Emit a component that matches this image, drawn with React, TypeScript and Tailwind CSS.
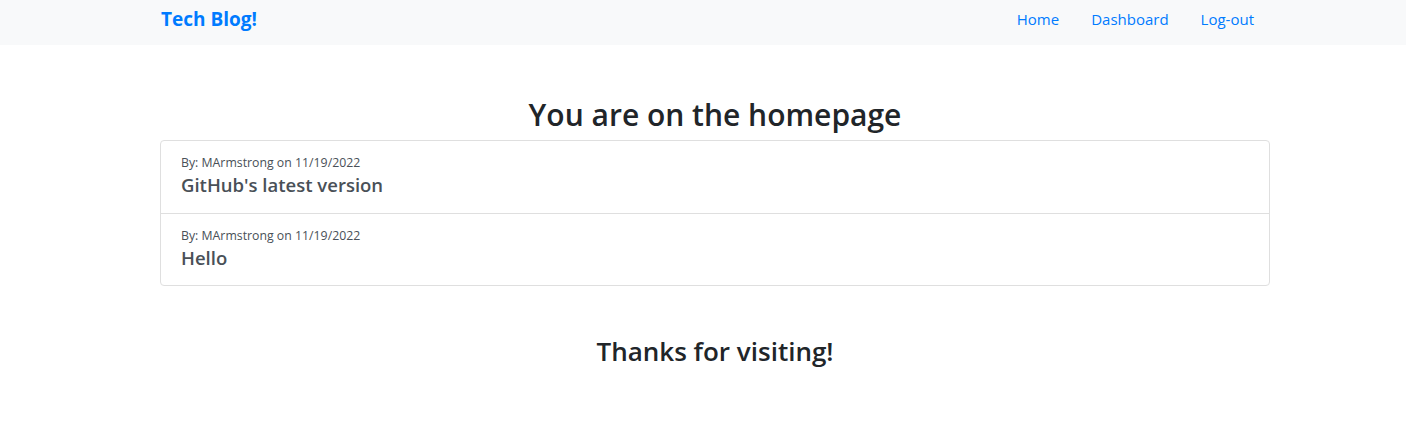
const posts = [
  { author: "MArmstrong", date: "11/19/2022", title: "GitHub's latest version" },
  { author: "MArmstrong", date: "11/19/2022", title: "Hello" },
];

const FONT = "font-['Open_Sans','Noto_Sans',sans-serif]";

export default function App() {
  return (
    <div className={`min-h-[434px] bg-white text-[#212529] ${FONT}`}>
      {/* Navbar */}
      <nav className="h-[45px] bg-[#f8f9fa]">
        <div className="ml-[160px] flex h-full w-[1110px] items-center justify-between pb-[6px]">
          <a className="pl-px text-[19px] font-bold text-[#007bff]">Tech Blog!</a>
          <div className="flex items-center text-[15px] text-[#007bff]">
            <a className="px-4">Home</a>
            <a className="px-4">Dashboard</a>
            <a className="px-4">Log-out</a>
          </div>
        </div>
      </nav>

      <main className="ml-[160px] w-[1110px]">
        <h1 className="mt-[51px] text-center text-[30px] leading-[38px] font-semibold">
          You are on the homepage
        </h1>

        <div className="mt-[6px] rounded border border-[#dfdfdf]">
          {posts.map((post, i) => (
            <div
              key={i}
              className={`h-[72px] px-5 pt-[13px] text-[#495057] ${i > 0 ? "border-t border-[#dfdfdf]" : ""}`}
            >
              <p className="text-[12.3px] leading-[18px]">
                By: {post.author} on {post.date}
              </p>
              <h5 className="text-[18.5px] leading-[25px] font-semibold">{post.title}</h5>
            </div>
          ))}
        </div>

        <h2 className="mt-[48px] text-center text-[26px] leading-[34px] font-semibold">
          Thanks for visiting!
        </h2>
      </main>
    </div>
  );
}
